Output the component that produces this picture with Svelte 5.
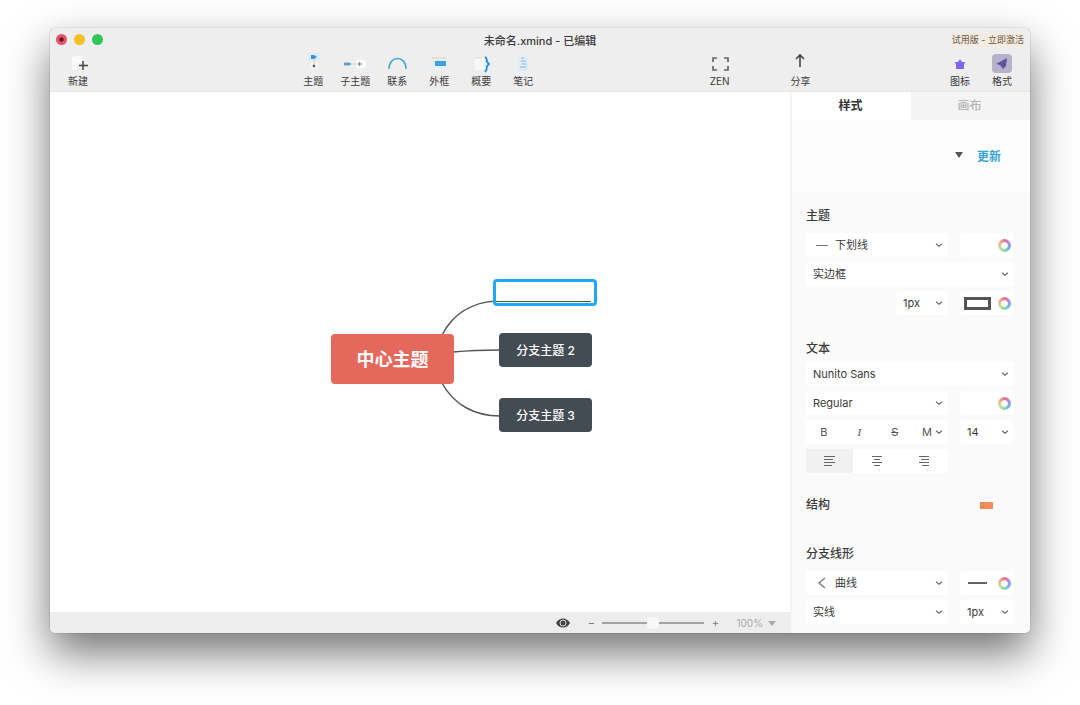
<script lang="ts">
	type Tool = { id: string; label: string; active?: boolean };

	const insertTools: Tool[] = [
		{ id: 'topic', label: '主题' },
		{ id: 'subtopic', label: '子主题' },
		{ id: 'relation', label: '联系' },
		{ id: 'boundary', label: '外框' },
		{ id: 'summary', label: '概要' },
		{ id: 'note', label: '笔记' }
	];

	const panelTools: Tool[] = [
		{ id: 'marker', label: '图标' },
		{ id: 'format', label: '格式', active: true }
	];

	const branches = [
		{ text: '分支主题 2', x: 449, y: 241 },
		{ text: '分支主题 3', x: 449, y: 306 }
	];

	let tab = $state('style');
	let align = $state('left');
	let zoom = $state(50);
	let draft = $state('');
</script>

{#snippet chevron()}
	<svg class="chevron" viewBox="0 0 8 8" aria-hidden="true">
		<path d="M1 2.8 4 5.2 7 2.8" fill="none" stroke="#666" stroke-width="1.1" />
	</svg>
{/snippet}

{#snippet toolButton(tool: Tool)}
	<button class="tool" class:active={tool.active}>
		<svg class="tool-icon" viewBox="0 0 20 20" aria-hidden="true" fill="none">
			{#if tool.id === 'new'}
				<path d="M5 2h9v7H9v7H4V4z" fill="#fafafa" />
				<path d="M15 7v9M11 11.5h9" stroke="#444" stroke-width="1.5" />
			{:else if tool.id === 'topic'}
				<rect x="5" y="-1" width="13" height="8" rx="2" fill="#dcecfa" />
				<path d="M8 1h3l3 2-3 2H8z" fill="#3593dc" />
				<rect x="7" y="8" width="8" height="7" rx="2" fill="#f7f4f1" />
				<path d="M11 5v5" stroke="#e8c9b4" />
				<circle cx="11" cy="12" r="1.4" fill="#666" />
			{:else if tool.id === 'subtopic'}
				<rect x="11" y="6" width="10" height="8" rx="2" fill="#fbfbfb" />
				<path d="M-1 8.500h5l3 1.500-3 1.500h-5z" fill="#5a9fce" />
				<path d="M7 10h4" stroke="#e8c9b4" />
				<path d="M12 10h5M14.500 8v4" stroke="#888" stroke-width="1.2" />
			{:else if tool.id === 'relation'}
				<path d="M2 15C2 1 19 1 19 15" stroke="#44a9d2" stroke-width="1.6" />
			{:else if tool.id === 'boundary'}
				<rect x="2" y="4" width="17" height="11" rx="1" fill="#e3f1fc" />
				<path d="M3 4h14" stroke="#efc9a8" />
				<rect x="6" y="7" width="11" height="5" fill="#429fdf" />
			{:else if tool.id === 'summary'}
				<rect x="4" y="4" width="9" height="12" fill="#f8f8f8" />
				<path d="M4 4h7" stroke="#f0d5bd" />
				<path d="M14 3c2 1 2 3 2 5l2 2-2 2c0 2 0 4-2 6" stroke="#1890e0" stroke-width="1.8" />
			{:else if tool.id === 'note'}
				<rect x="5" y="3" width="10" height="14" rx="1" fill="#dcecf8" />
				<path d="M8 4h3M8 7h5M9 10h4M7 13h6" stroke="#94b4ce" stroke-width="1.2" />
			{:else if tool.id === 'zen'}
				<path
					d="M3 8V4h4M14 4h4v4M18 12v4h-4M7 16H3v-4"
					stroke="#666"
					stroke-width="1.7"
				/>
			{:else if tool.id === 'share'}
				<path d="M10 13V1M6 5l4-4 4 4" stroke="#444" stroke-width="1.6" />
			{:else if tool.id === 'marker'}
				<path d="m10 5 2 3h3l-1 3v4H6v-4L5 8h3z" fill="#8064ee" />
			{:else}
				<rect x="0" y="0" width="20" height="19" rx="4" fill="#b7b1c9" />
				<path d="M15 4 4 10l4 1 3 4 3-3z" fill="#5f529c" />
			{/if}
		</svg>
		<span>{tool.label}</span>
	</button>
{/snippet}

{#snippet alignIcon(kind: string)}
	<svg class="align-icon" viewBox="0 0 12 12" aria-hidden="true">
		{#if kind === 'left'}
			<path d="M0 1.5h11M0 4.5h9M0 7.5h11M0 10.5h8" />
		{:else if kind === 'center'}
			<path d="M1 1.5h10M3 4.5h6M1 7.5h10M3 10.5h6" />
		{:else}
			<path d="M1 1.5h10M3 4.5h8M1 7.5h10M4 10.5h7" />
		{/if}
	</svg>
{/snippet}

<div class="desktop">
	<div class="window">
		<header>
			<div class="titlebar">
				<div class="lights">
					<button class="light close" aria-label="关闭"></button>
					<button class="light minimize" aria-label="最小化"></button>
					<button class="light maximize" aria-label="缩放"></button>
				</div>
				<h1>未命名.xmind - 已编辑</h1>
				<a class="trial" href="#activate">试用版 - 立即激活</a>
			</div>

			<nav class="toolbar">
				{@render toolButton({ id: 'new', label: '新建' })}
				<div class="space-wide"></div>
				{#each insertTools as tool (tool.id)}
					{@render toolButton(tool)}
				{/each}
				<div class="space-mid"></div>
				{@render toolButton({ id: 'zen', label: 'ZEN' })}
				<div class="space-small"></div>
				{@render toolButton({ id: 'share', label: '分享' })}
				<div class="space-end"></div>
				{#each panelTools as tool (tool.id)}
					{@render toolButton(tool)}
				{/each}
			</nav>
		</header>

		<div class="body">
			<main>
				<div class="canvas">
					<svg class="links" aria-hidden="true">
						<path d="M392 243C402 224 420 210 447 209" />
						<path d="M403 260Q425 258 450 258" />
						<path d="M392 291C404 313 425 324 450 324" />
					</svg>
					<div class="node central">中心主题</div>
					<input class="node editing" aria-label="分支主题 1" bind:value={draft} />
					{#each branches as branch (branch.text)}
						<div class="node branch" style="left: {branch.x}px; top: {branch.y}px">
							{branch.text}
						</div>
					{/each}
				</div>

				<footer>
					<button class="eye" aria-label="显示">
						<svg viewBox="0 0 14 10" aria-hidden="true">
							<path d="M0 5C3-1 11-1 14 5 11 11 3 11 0 5z" fill="#444" />
							<circle cx="7" cy="5" r="3" fill="none" stroke="#ddd" />
						</svg>
					</button>
					<div class="zoom">
						<button aria-label="缩小">−</button>
						<input type="range" aria-label="缩放比例" min="0" max="100" bind:value={zoom} />
						<button aria-label="放大">+</button>
					</div>
					<button class="percent">
						100%
						<svg viewBox="0 0 8 6" aria-hidden="true"><path d="M0 1h8L4 6z" fill="#aaa" /></svg>
					</button>
				</footer>
			</main>

			<aside>
				<div class="tabs">
					<button class:selected={tab === 'style'} onclick={() => (tab = 'style')}>样式</button>
					<button class:selected={tab === 'map'} onclick={() => (tab = 'map')}>画布</button>
				</div>

				<div class="preset">
					<button class="preset-menu" aria-label="样式预设">
						<svg viewBox="0 0 8 6" aria-hidden="true"><path d="M0 0h8L4 6z" fill="#555" /></svg>
					</button>
					<button class="update">更新</button>
				</div>

				<div class="sections">
					<section>
						<h2>主题</h2>
						<div class="row">
							<label class="field with-icon">
								<svg class="lead" viewBox="0 0 12 12" aria-hidden="true">
									<path d="M0 6.5h12" stroke="#777" />
								</svg>
								<select aria-label="外形"><option>下划线</option></select>
								{@render chevron()}
							</label>
							<button class="swatch" aria-label="填充颜色"><span class="wheel"></span></button>
						</div>
						<label class="field">
							<select aria-label="边框"><option>实边框</option></select>
							{@render chevron()}
						</label>
						<div class="row">
							<label class="field narrow">
								<select aria-label="边框粗细"><option>1px</option></select>
								{@render chevron()}
							</label>
							<button class="swatch" aria-label="边框颜色">
								<span class="outline"></span><span class="wheel"></span>
							</button>
						</div>
					</section>

					<section class="text">
						<h2>文本</h2>
						<label class="field">
							<select aria-label="字体"><option>Nunito Sans</option></select>
							{@render chevron()}
						</label>
						<div class="row">
							<label class="field">
								<select aria-label="字重"><option>Regular</option></select>
								{@render chevron()}
							</label>
							<button class="swatch" aria-label="文字颜色"><span class="wheel"></span></button>
						</div>
						<div class="row">
							<div class="formats">
								<button>B</button>
								<button class="italic">I</button>
								<button class="strike">S</button>
								<button class="case">M{@render chevron()}</button>
							</div>
							<label class="field">
								<select aria-label="字号"><option>14</option></select>
								{@render chevron()}
							</label>
						</div>
						<div class="row">
							<div class="aligns">
								{#each ['left', 'center', 'right'] as kind (kind)}
									<button
										class:selected={align === kind}
										aria-label={kind}
										onclick={() => (align = kind)}
									>
										{@render alignIcon(kind)}
									</button>
								{/each}
							</div>
						</div>
					</section>

					<section class="structure">
						<h2>结构</h2>
						<button aria-label="结构">
							<svg viewBox="0 0 13 7" aria-hidden="true">
								<path d="M0 0h13v7H0z" fill="#f58c5c" />
								<path d="M0 1h4M0 5h4" stroke="#c98a68" />
							</svg>
						</button>
					</section>

					<section>
						<h2>分支线形</h2>
						<div class="row">
							<label class="field with-icon">
								<svg class="lead" viewBox="0 0 12 12" aria-hidden="true">
									<path d="M9 1 3 6l6 5" fill="none" stroke="#777" stroke-width="1.3" />
								</svg>
								<select aria-label="线形"><option>曲线</option></select>
								{@render chevron()}
							</label>
							<button class="swatch" aria-label="线条颜色">
								<span class="line"></span><span class="wheel"></span>
							</button>
						</div>
						<div class="row">
							<label class="field">
								<select aria-label="线条样式"><option>实线</option></select>
								{@render chevron()}
							</label>
							<label class="field">
								<select aria-label="线条粗细"><option>1px</option></select>
								{@render chevron()}
							</label>
						</div>
					</section>
				</div>
			</aside>
		</div>
	</div>
</div>

<style>
	:global(body) {
		margin: 0;
		background: #fff;
	}

	.desktop,
	.desktop * {
		box-sizing: border-box;
	}

	.desktop {
		min-height: 100vh;
		padding: 28px 50px 72px;
		display: flex;
		font-family: Inter, 'Noto Sans CJK SC', sans-serif;
		font-size: 11px;
		color: #3a3a3a;
		overflow: hidden;
	}

	button,
	select,
	input {
		font: inherit;
		color: inherit;
		background: none;
		border: none;
		margin: 0;
		padding: 0;
	}

	.window {
		flex: 1;
		display: flex;
		flex-direction: column;
		border-radius: 5px;
		overflow: hidden;
		background: #fff;
		box-shadow:
			0 0 1px rgba(0, 0, 0, 0.6),
			0 20px 44px rgba(0, 0, 0, 0.55);
	}

	header {
		background: #eeeeef;
		border-bottom: 1px solid #e8e8ec;
	}

	.titlebar {
		display: grid;
		grid-template-columns: 1fr auto 1fr;
		align-items: center;
		height: 23px;
		padding: 0 6px;
	}

	.lights {
		display: flex;
		gap: 7px;
	}

	.light {
		width: 11px;
		height: 11px;
		border-radius: 50%;
	}

	.close {
		background: radial-gradient(circle, #6c1020 20%, #e2566a 35%);
	}

	.minimize {
		background: #f2c024;
	}

	.maximize {
		background: #34c558;
	}

	h1 {
		margin: 0;
		font-size: 11px;
		font-weight: 500;
	}

	.trial {
		justify-self: end;
		font-size: 9px;
		line-height: 14px;
		background: #f4ebe0;
		color: #6a5648;
		text-decoration: none;
	}

	.toolbar {
		display: flex;
		height: 40px;
		padding: 3px 7px 0;
	}

	.tool {
		width: 42px;
		display: flex;
		flex-direction: column;
		align-items: center;
		font-size: 10px;
		line-height: 15px;
		white-space: nowrap;
	}

	.tool-icon {
		width: 20px;
		height: 20px;
		overflow: visible;
	}

	.space-wide {
		flex: 194;
	}

	.space-mid {
		flex: 155;
	}

	.space-small {
		flex: 39;
	}

	.space-end {
		flex: 118;
	}

	.body {
		flex: 1;
		display: flex;
	}

	main {
		flex: 1;
		display: flex;
		flex-direction: column;
	}

	.canvas {
		flex: 1;
		position: relative;
	}

	.links {
		position: absolute;
		width: 100%;
		height: 100%;
	}

	.links path {
		fill: none;
		stroke: #555;
		stroke-width: 1.5;
	}

	.node {
		position: absolute;
		display: flex;
		align-items: center;
		justify-content: center;
		border-radius: 4px;
		color: #fff;
	}

	.central {
		left: 281px;
		top: 242px;
		width: 123px;
		height: 50px;
		padding-bottom: 2px;
		background: #e4685b;
		font-size: 18px;
		font-weight: 700;
	}

	.branch {
		width: 93px;
		height: 34px;
		padding-bottom: 2px;
		background: #434b53;
		font-size: 12px;
		font-weight: 500;
	}

	.editing {
		left: 443px;
		top: 187px;
		width: 104px;
		height: 27px;
		border: 3px solid #20a8f2;
		background: linear-gradient(#555, #555) 0 19px / 95px 1px no-repeat #fff;
		color: #333;
		padding: 0 6px;
		outline: none;
	}

	footer {
		height: 21px;
		padding: 0 14px;
		display: flex;
		align-items: center;
		justify-content: flex-end;
		background: #ededed;
		color: #777;
	}

	.eye {
		display: flex;
		margin-right: 16px;
	}

	.eye svg {
		width: 14px;
		height: 10px;
	}

	.zoom {
		display: flex;
		align-items: center;
		gap: 6px;
	}

	.zoom button {
		width: 10px;
		line-height: 14px;
	}

	.zoom input {
		appearance: none;
		width: 102px;
		height: 12px;
	}

	.zoom input::-webkit-slider-runnable-track {
		height: 2px;
		background: #a4a4a4;
	}

	.zoom input::-webkit-slider-thumb {
		appearance: none;
		width: 12px;
		height: 12px;
		margin-top: -5px;
		border-radius: 4px;
		background: #f8f8f8;
	}

	.percent {
		display: flex;
		align-items: center;
		gap: 5px;
		margin-left: 16px;
		font-size: 10px;
		color: #aaa;
	}

	.percent svg {
		width: 8px;
		height: 6px;
	}

	aside {
		width: 240px;
		display: flex;
		flex-direction: column;
		background: #fafafb;
		border-left: 2px solid #f4f4f6;
	}

	.tabs {
		display: flex;
		height: 28px;
	}

	.tabs button {
		flex: 1;
		padding: 0 2px 3px 0;
		background: #f4f4f5;
		font-size: 12px;
		font-weight: 500;
		color: #b4b4b4;
	}

	.tabs .selected {
		background: #fff;
		font-weight: 700;
		color: #333;
	}

	.preset {
		display: flex;
		align-items: center;
		justify-content: flex-end;
		gap: 14px;
		height: 72px;
		padding: 0 29px 2px;
		background: #fdfdfe;
	}

	.preset-menu svg {
		display: block;
		width: 8px;
		height: 6px;
	}

	.update {
		font-size: 12px;
		font-weight: 700;
		color: #3ba4d6;
	}

	.sections {
		display: flex;
		flex-direction: column;
		gap: 20px;
		padding: 12px 16px 9px 14px;
	}

	section {
		display: flex;
		flex-direction: column;
		gap: 5px;
	}

	h2 {
		margin: 0;
		font-size: 12px;
		font-weight: 500;
		line-height: 24px;
	}

	.text {
		padding-top: 2px;
	}

	.text h2 {
		margin-bottom: -4px;
	}

	.structure {
		flex-direction: row;
		align-items: center;
		justify-content: space-between;
		padding: 0 21px 5px 0;
	}

	.structure svg {
		display: block;
		width: 13px;
		height: 7px;
	}

	.row {
		display: grid;
		grid-template-columns: 142px 1fr;
		gap: 12px;
	}

	.field {
		display: grid;
		grid-template-columns: 1fr;
		align-items: center;
		height: 24px;
		border-radius: 3px;
		background: #fff;
	}

	.field > * {
		grid-area: 1 / 1;
	}

	.field select {
		appearance: none;
		width: 100%;
		height: 24px;
		padding: 0 7px;
	}

	.with-icon select {
		padding-left: 29px;
	}

	.lead {
		width: 12px;
		height: 12px;
		margin-left: 10px;
	}

	.narrow {
		width: 52px;
		justify-self: end;
	}

	.chevron {
		width: 8px;
		height: 8px;
	}

	.field .chevron {
		justify-self: end;
		margin-right: 5px;
		pointer-events: none;
	}

	.swatch {
		display: flex;
		align-items: center;
		justify-content: flex-end;
		gap: 7px;
		padding-right: 3px;
		border-radius: 3px;
		background: #fff;
	}

	.wheel {
		width: 13px;
		height: 13px;
		border-radius: 50%;
		background:
			radial-gradient(circle, #fff 32%, transparent 40%),
			conic-gradient(#e8718c, #b48ae0, #6cb4f0, #8fd8a8, #c8e0a0, #f0b48c, #e8718c);
	}

	.outline {
		width: 27px;
		height: 13px;
		border: 3px solid #555;
	}

	.line {
		width: 19px;
		height: 2px;
		margin-right: 4px;
		background: #666;
	}

	.formats {
		display: grid;
		grid-template-columns: repeat(4, 1fr);
		height: 24px;
		background: #fff;
		border-radius: 3px;
		color: #555;
	}

	.italic {
		font-family: 'Liberation Serif', serif;
		font-style: italic;
	}

	.strike {
		text-decoration: line-through;
	}

	.case {
		display: flex;
		align-items: center;
		justify-content: flex-end;
		gap: 3px;
		padding-right: 5px;
	}

	.aligns {
		display: grid;
		grid-template-columns: repeat(3, 1fr);
		height: 24px;
		background: #fff;
		border-radius: 3px;
	}

	.aligns button {
		display: flex;
		align-items: center;
		justify-content: center;
	}

	.aligns .selected {
		background: #f1f1f2;
	}

	.align-icon {
		width: 12px;
		height: 12px;
		stroke: #666;
	}
</style>
